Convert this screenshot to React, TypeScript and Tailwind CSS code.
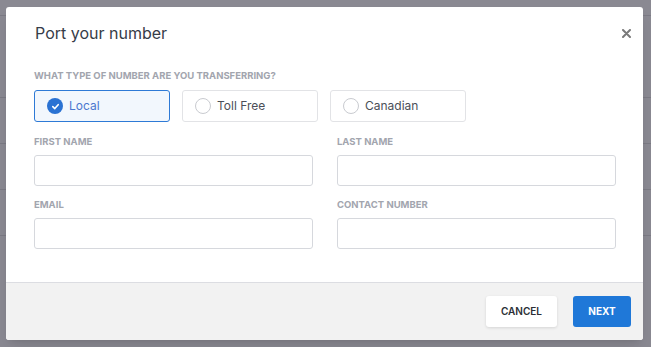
import React, { useState } from 'react';

type NumberType = 'local' | 'tollfree' | 'canadian';

const options: { id: NumberType; label: string }[] = [
    { id: 'local', label: 'Local' },
    { id: 'tollfree', label: 'Toll Free' },
    { id: 'canadian', label: 'Canadian' },
];

const Field: React.FC<{ label: string }> = ({ label }) => (
    <div className="flex flex-col">
        <label className="text-[9.5px] font-bold uppercase text-[#a2a5ae] leading-[12px] mb-[7px]">{label}</label>
        <input className="h-[31px] w-full rounded-[3px] border border-[#d6d8dd] bg-white px-2 text-[12px] outline-none" />
    </div>
);

export default function App() {
    const [type, setType] = useState<NumberType>('local');

    return (
        <div className="relative h-[347px] w-[651px] overflow-hidden bg-[#8a8992]" style={{ fontFamily: 'Inter, "Noto Sans", sans-serif' }}>
            {/* page behind the overlay */}
            <div className="flex flex-col pt-[15px]">
                <div className="h-[82px] border-t border-[#7b7a84]" />
                <div className="h-[46px] border-t border-[#7b7a84]" />
                <div className="h-[46px] border-t border-[#7b7a84]" />
                <div className="h-[46px] border-t border-[#7b7a84]" />
                <div className="h-[46px] border-t border-[#7b7a84]" />
            </div>

            <div className="absolute left-[6px] top-[7px] flex h-[333px] w-[637px] flex-col overflow-hidden rounded-[3px] bg-white shadow-lg">
                <div className="flex items-center justify-between pl-[29px] pr-[7px] pt-[14px]">
                    <h2 className="text-[16px] font-normal text-[#363c48] leading-[24px]">Port your number</h2>
                    <button className="flex h-[20px] w-[20px] items-center justify-center text-[#7a7a7a]">
                        <svg width="9" height="9" viewBox="0 0 9 9">
                            <path d="M1 1L8 8M8 1L1 8" stroke="currentColor" strokeWidth="2" strokeLinecap="round" />
                        </svg>
                    </button>
                </div>

                <div className="flex-1 pl-[28px] pr-[27px] pt-[25px]">
                    <div className="text-[9.5px] font-bold uppercase text-[#a2a5ae] leading-[12px] mb-[8px]">What type of number are you transferring?</div>
                    <div className="flex gap-[12px]">
                        {options.map(o => {
                            const active = type === o.id;
                            return (
                                <button
                                    key={o.id}
                                    onClick={() => setType(o.id)}
                                    className={`flex h-[32px] w-[136px] items-center gap-[6px] rounded-[3px] pl-[12px] text-[12px] ${active ? 'border-[1.5px] border-[#2e7ad6] bg-[#f2f7fd] text-[#4a78cf]' : 'border border-[#e2e3e6] bg-white text-[#4b4f58]'}`}
                                >
                                    {active ? (
                                        <span className="flex h-[16px] w-[16px] items-center justify-center rounded-full bg-[#2a72d3]">
                                            <svg width="9" height="9" viewBox="0 0 10 10">
                                                <path d="M2 5.2L4.2 7.3L8 3" stroke="white" strokeWidth="1.8" fill="none" strokeLinecap="round" strokeLinejoin="round" />
                                            </svg>
                                        </span>
                                    ) : (
                                        <span className="h-[16px] w-[16px] rounded-full border border-[#c9cbd0] bg-white" />
                                    )}
                                    <span>{o.label}</span>
                                </button>
                            );
                        })}
                    </div>

                    <div className="mt-[14px] grid grid-cols-2 gap-x-[24px] gap-y-[13px]">
                        <Field label="First Name" />
                        <Field label="Last Name" />
                        <Field label="Email" />
                        <Field label="Contact Number" />
                    </div>
                </div>

                <div className="flex h-[58px] items-center justify-end gap-[16px] border-t border-[#dcdde2] bg-[#f2f2f2] pr-[12px]">
                    <button className="h-[31px] w-[71px] rounded-[3px] bg-white text-[10px] font-semibold text-[#2b2f36] shadow-[0_1px_3px_rgba(0,0,0,0.12)]">CANCEL</button>
                    <button className="h-[31px] w-[58px] rounded-[3px] bg-[#1f78d8] text-[10px] font-bold text-white">NEXT</button>
                </div>
            </div>
        </div>
    );
}
